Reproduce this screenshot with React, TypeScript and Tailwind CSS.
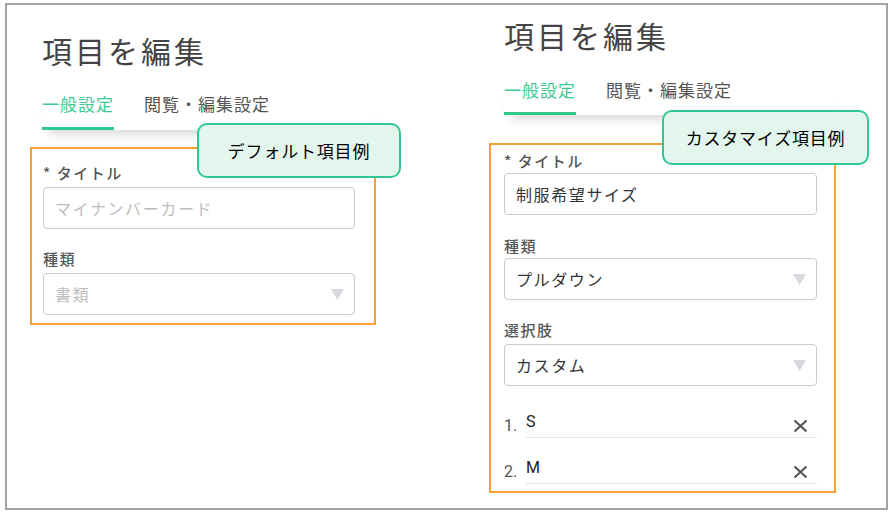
import { ReactNode } from "react";

// Small pieces of the edit form
function Heading({ className }: { className: string }) {
    return (
        <h1 className={`ml-[12px] text-[30px] leading-none tracking-[3px] text-[#444] font-normal ${className}`}>
            項目を編集
        </h1>
    );
}

function Tabs({ className, padClass }: { className: string; padClass: string }) {
    return (
        <div className={`ml-[12px] w-[333px] flex gap-[30px] bg-white shadow-[0_10px_12px_-7px_rgba(0,0,0,0.18)] ${className}`}>
            <div className={`text-[17px] leading-none tracking-[1px] text-[#3fcb93] border-b-[3px] border-[#2ec98c] ${padClass}`}>
                一般設定
            </div>
            <div className="text-[17px] leading-none tracking-[1px] text-[#555]">閲覧・編集設定</div>
        </div>
    );
}

function Label({ children, className = "" }: { children: ReactNode; className?: string }) {
    return (
        <div className={`text-[15px] leading-none tracking-[0.1em] text-[#555] font-medium ${className}`}>
            {children}
        </div>
    );
}

function TextBox({ value, muted, className }: { value: string; muted?: boolean; className: string }) {
    return (
        <div
            className={`h-[42px] flex items-center pl-[11px] border border-[#c9c9c9] rounded-[4px] text-[16px] tracking-[0.1em] ${
                muted ? "text-[#bdbdbd]" : "text-[#333]"
            } ${className}`}
        >
            {value}
        </div>
    );
}

function SelectBox({ value, muted, className }: { value: string; muted?: boolean; className: string }) {
    return (
        <div
            className={`h-[42px] flex items-center justify-between pl-[11px] pr-[10px] border border-[#c9c9c9] rounded-[4px] text-[16px] tracking-[0.1em] ${
                muted ? "text-[#bdbdbd]" : "text-[#333]"
            } ${className}`}
        >
            <span>{value}</span>
            <svg width="13" height="11" viewBox="0 0 13 11">
                <polygon points="0,0 13,0 6.5,11" fill="#d6d9de" />
            </svg>
        </div>
    );
}

function OptionRow({ num, value, className }: { num: string; value: string; className: string }) {
    return (
        <div className={`flex font-['Roboto','Noto_Sans_CJK_JP',sans-serif] ${className}`}>
            <span className="w-[22px] mt-[8px] text-[16px] leading-none text-[#555]">{num}</span>
            <div className="flex-1 h-[28px] flex items-start border-b border-[#e3e5e8]">
                <span className="mt-[4px] text-[16px] leading-none text-[#222]">{value}</span>
                <svg className="ml-auto mt-[9px] mr-[9px]" width="15" height="14" viewBox="0 0 15 14">
                    <path d="M1.5 1.5 L13.5 12.5 M13.5 1.5 L1.5 12.5" stroke="#555" strokeWidth="2.2" />
                </svg>
            </div>
        </div>
    );
}

function Callout({ text, className }: { text: string; className: string }) {
    return (
        <div
            className={`absolute h-[55px] flex items-center justify-center rounded-[10px] border-2 border-[#31c98f] bg-[#e3f6ee] text-[17px] font-normal tracking-[0.8px] text-black ${className}`}
        >
            {text}
        </div>
    );
}

export default function App() {
    return (
        <div className="w-[895px] h-[518px] bg-white pt-[3px] pl-[5px] font-['Noto_Sans_CJK_JP',sans-serif]">
            <div className="w-[883px] h-[507px] border-2 border-[#a3a3a3] flex">
                {/* Default field */}
                <div className="relative w-[454px] pl-[23px] pt-[30px] flex flex-col">
                    <Heading className="" />
                    <Tabs className="mt-[30px]" padClass="pb-[15px]" />
                    <div className="mt-[17px] w-[346px] border-2 border-[#f7a131] pt-[16px] pl-[11px] pr-[19px] pb-[8px]">
                        <Label>* タイトル</Label>
                        <TextBox value="マイナンバーカード" muted className="mt-[7px]" />
                        <Label className="mt-[22px]">種類</Label>
                        <SelectBox value="書類" muted className="mt-[7px]" />
                    </div>
                    <Callout text="デフォルト項目例" className="left-[190px] top-[118px] w-[204px]" />
                </div>

                {/* Custom field */}
                <div className="relative flex-1 pl-[28px] pt-[15px] flex flex-col">
                    <Heading className="ml-[15px]" />
                    <Tabs className="mt-[31px] !ml-[15px]" padClass="pb-[14px]" />
                    <div className="mt-[28px] w-[347px] border-2 border-[#f7a131] pt-[8px] pl-[13px] pr-[17px] pb-[7px]">
                        <Label>* タイトル</Label>
                        <TextBox value="制服希望サイズ" className="mt-[5px]" />
                        <Label className="mt-[23px]">種類</Label>
                        <SelectBox value="プルダウン" className="mt-[5px]" />
                        <Label className="mt-[22px]">選択肢</Label>
                        <SelectBox value="カスタム" className="mt-[7px]" />
                        <OptionRow num="1." value="S" className="mt-[24px]" />
                        <OptionRow num="2." value="M" className="mt-[18px]" />
                    </div>
                    <Callout text="カスタマイズ項目例" className="left-[201px] top-[105px] w-[207px]" />
                </div>
            </div>
        </div>
    );
}
